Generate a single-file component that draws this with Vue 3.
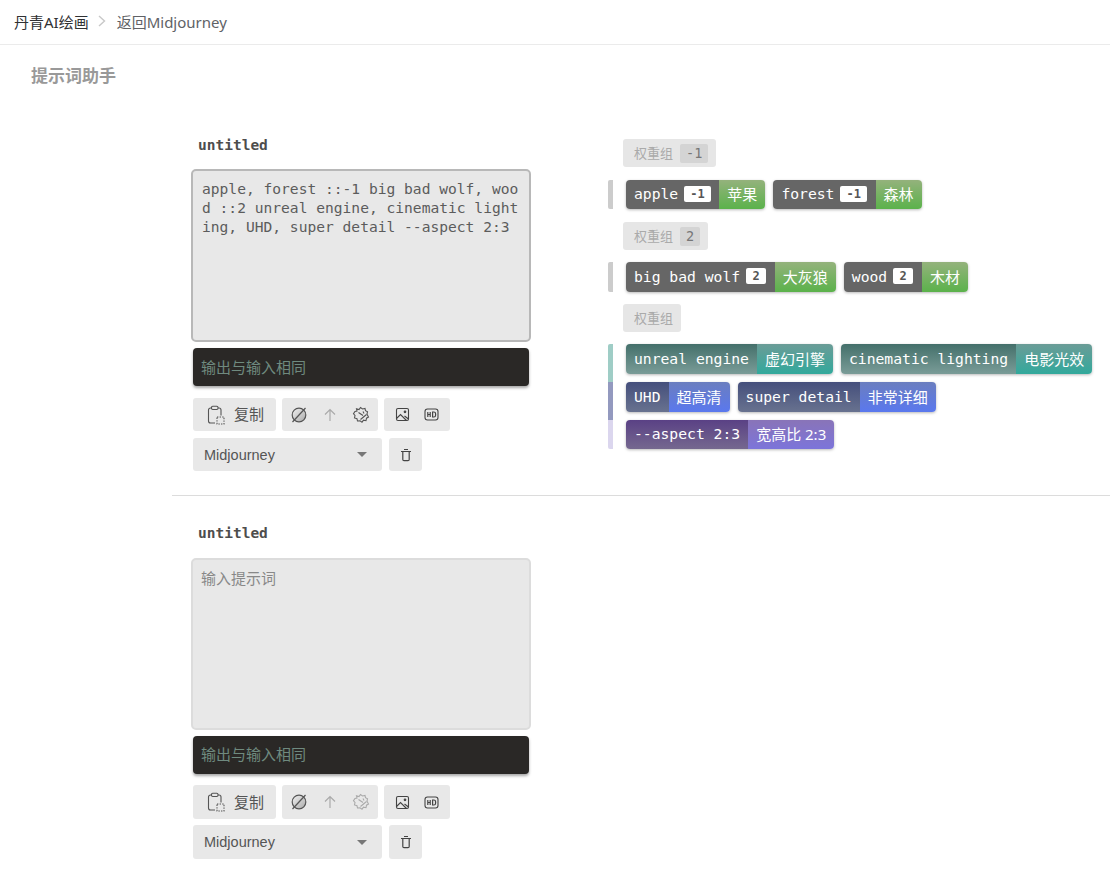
<script setup>
const groups = [
  { label: '权重组', weight: '-1', rows: [
    { bar: 'bar-gray', tags: [
      { en: 'apple', w: '-1', zh: '苹果', c: 'green' },
      { en: 'forest', w: '-1', zh: '森林', c: 'green' } ] } ] },
  { label: '权重组', weight: '2', rows: [
    { bar: 'bar-gray', tall: true, tags: [
      { en: 'big bad wolf', w: '2', zh: '大灰狼', c: 'green' },
      { en: 'wood', w: '2', zh: '木材', c: 'green' } ] } ] },
  { label: '权重组', weight: '', rows: [
    { bar: 'bar-teal', tags: [
      { en: 'unreal engine', zh: '虚幻引擎', c: 'teal' },
      { en: 'cinematic lighting', zh: '电影光效', c: 'teal' } ] },
    { bar: 'bar-blue', tags: [
      { en: 'UHD', zh: '超高清', c: 'blue' },
      { en: 'super detail', zh: '非常详细', c: 'blue' } ] },
    { bar: 'bar-purple', last: true, tags: [
      { en: '--aspect 2:3', zh: '宽高比 2:3', c: 'purple' } ] } ] },
]
const sections = [
  { text: 'apple, forest ::-1 big bad wolf, wood ::2 unreal engine, cinematic lighting, UHD, super detail --aspect 2:3', active: true },
  { text: '', active: false },
]
</script>

<template>
  <div class="page">
    <header class="topbar">
      <span class="crumb-home">丹青AI绘画</span>
      <svg class="crumb-sep" width="10" height="12" viewBox="0 0 10 12"><path d="M2 1l5.500 5L2 11" fill="none" stroke="#c8c8c8" stroke-width="1.400"/></svg>
      <span class="crumb-back">返回Midjourney</span>
    </header>
    <h1 class="title">提示词助手</h1>

    <main class="sections">
      <section v-for="(s, i) in sections" :key="i" class="section" :class="{ first: i === 0 }">
        <div class="editor">
          <div class="name">untitled</div>
          <div class="input" :class="{ active: s.active }">
            <span v-if="s.text" class="input-text">{{ s.text }}</span>
            <span v-else class="placeholder">输入提示词</span>
          </div>
          <div class="output">输出与输入相同</div>
          <div class="toolbar">
            <div class="btn-group copy">
              <svg width="18" height="20" viewBox="0 0 18 20" fill="none" stroke="#555" stroke-width="1.100">
                <path d="M8 18H3.500a2 2 0 0 1-2-2V5a2 2 0 0 1 2-2h8.500a2 2 0 0 1 2 2v5.500"/>
                <rect x="4.500" y="1.200" width="6.500" height="3.300" rx="1.200" fill="#e8e8e8"/>
                <rect x="10" y="12" width="7" height="7" stroke-dasharray="1.400 1.200"/>
              </svg>
              <span class="copy-label">复制</span>
            </div>
            <div class="btn-group tools">
              <svg width="18" height="18" viewBox="0 0 18 18" fill="none">
                <defs><linearGradient :id="'g' + i" x1="0" y1="0" x2="1" y2="1"><stop offset="0" stop-color="#f2f2f2"/><stop offset="1" stop-color="#aaa"/></linearGradient></defs>
                <circle cx="9" cy="9" r="6.800" :fill="'url(#g' + i + ')'" stroke="#555" stroke-width="1.200"/>
                <path d="M2.500 16L15.500 2" stroke="#555" stroke-width="1.200"/>
              </svg>
              <svg width="14" height="14" viewBox="0 0 14 14" fill="none" stroke="#aaa" stroke-width="1.200"><path d="M7 13V1.500M2 6.500l5-5 5 5"/></svg>
              <svg width="18" height="18" viewBox="0 0 18 18" fill="none" :stroke="s.active ? '#555' : '#aaa'" stroke-width="1.100">
                <path d="M3 5.500L5 5 4.500 2.800 7 3.500 8.500 1.500l2 1.500 2.500-.5.500 2.200 2 1-.500 2.500L16.500 11l-2 1.200-.5 2.500-2.500-.5-1.500 2-2-1.500-2.500.3-.5-2.200L2.500 12 3 9.500 1.500 7.800z"/>
                <path d="M8.500 13.500l6-5M6.500 6.500l4.500 3M11 5.500l1 2"/>
              </svg>
            </div>
            <div class="btn-group media">
              <svg width="15" height="15" viewBox="0 0 15 15" fill="none" stroke="#444" stroke-width="1.100">
                <rect x="1.500" y="1.500" width="12" height="12" rx="1.500"/>
                <path d="M1.500 11.500L5.500 7.500l6 6M9.500 9l4 3"/>
                <circle cx="10" cy="4.800" r=".8" fill="#444"/>
              </svg>
              <svg width="15" height="15" viewBox="0 0 15 15" fill="none" stroke="#444" stroke-width="1.100">
                <rect x="1" y="2" width="13" height="11" rx="2.500"/>
                <path d="M3.800 5v5M3.800 7.500h2.400M6.200 5v5M8.600 5v5h1.200a1.800 1.800 0 0 0 1.800-1.800V6.800A1.800 1.800 0 0 0 9.800 5z" stroke-width="1.200"/>
              </svg>
            </div>
          </div>
          <div class="selectrow">
            <div class="select">
              <span>Midjourney</span>
              <svg width="10" height="5" viewBox="0 0 10 5"><path d="M0 0h10L5 5z" fill="#777"/></svg>
            </div>
            <div class="trash">
              <svg width="12" height="14" viewBox="0 0 12 14" fill="none" stroke="#444" stroke-width="1.200">
                <path d="M1 3.500h10M4 1.500h4M2.800 3.500v8a1.200 1.200 0 0 0 1.200 1.200h4a1.200 1.200 0 0 0 1.200-1.200v-8"/>
              </svg>
            </div>
          </div>
        </div>

        <div v-if="s.active" class="result">
          <template v-for="(g, gi) in groups" :key="gi">
            <div class="glabel">
              <span class="glabel-text">{{ g.label }}</span>
              <span v-if="g.weight" class="gweight">{{ g.weight }}</span>
            </div>
            <div class="grows" :class="'g' + gi">
              <div v-for="(r, ri) in g.rows" :key="ri" class="row" :class="[r.bar, { tall: r.tall, last: r.last }]">
                <div v-for="t in r.tags" :key="t.en" class="tag" :class="t.c">
                  <span class="tag-en">{{ t.en }}<b v-if="t.w" class="tag-w">{{ t.w }}</b></span>
                  <span class="tag-zh">{{ t.zh }}</span>
                </div>
              </div>
            </div>
          </template>
        </div>
      </section>
    </main>
  </div>
</template>

<style>
body { background: #fff; }
</style>

<style scoped>
.page {
  width: 1110px;
  height: 874px;
  overflow: hidden;
  background: #fff;
  font-family: "Noto Sans", "Noto Sans CJK SC", sans-serif;
  color: #333;
}
.topbar {
  height: 44px;
  border-bottom: 1px solid #ebebeb;
  display: flex;
  align-items: center;
  padding-left: 14px;
  font-size: 15px;
  line-height: 20px;
}
.crumb-home { color: #303133; }
.crumb-sep { margin: -2px 10px 0 8px; }
.crumb-back { color: #606266; }
.title {
  margin: 0;
  padding: 20px 0 0 31px;
  height: 72px;
  box-sizing: border-box;
  font-size: 17px;
  line-height: 22px;
  font-weight: 700;
  color: #999;
}
.sections { margin-left: 172px; padding-top: 10px; }
.section { display: flex; padding: 0 0 12px 20px; }
.section.first { border-bottom: 1px solid #dcdcdc; height: 369px; box-sizing: border-box; padding-bottom: 0; margin-bottom: 20px; }
.editor { width: 416px; flex: none; }
.name {
  font-family: "DejaVu Sans Mono", monospace;
  font-size: 14.500px;
  font-weight: 700;
  line-height: 18px;
  color: #4d4d4d;
  padding: 9px 0 0 6px;
  height: 42px;
  box-sizing: border-box;
}
.section:not(.first) .name { padding-top: 8px; }
.input {
  width: 340px;
  height: 173px;
  box-sizing: border-box;
  border: 2px solid #dcdcdc;
  border-radius: 5px;
  background: #e8e8e8;
  padding: 8px 9px 0;
  margin-left: -1px;
  font-family: "DejaVu Sans Mono", monospace;
  font-size: 14.600px;
  line-height: 19px;
  color: #5c5c5c;
  word-break: break-all;
}
.input.active { border-color: #b8b8b8; }
.input:not(.active) { height: 172px; }
.placeholder { display: block; font-family: "Noto Sans CJK SC", sans-serif; font-size: 15px; color: #888; line-height: 20px; margin-left: -1px; }
.output {
  width: 336px;
  height: 38px;
  margin: 6px 0 0 1px;
  padding-left: 8px;
  box-sizing: border-box;
  border-radius: 4px;
  background: #2a2826;
  box-shadow: 0 2px 3px rgba(0,0,0,.35);
  color: #6f8a7f;
  font-size: 15px;
  line-height: 38px;
}
.toolbar { display: flex; gap: 6px; margin: 12px 0 0 1px; }
.section:not(.first) .toolbar { margin-top: 11px; }
.section:not(.first) .output { line-height: 36px; }
.btn-group {
  height: 33px;
  background: #e8e8e8;
  border-radius: 3px;
  display: flex;
  align-items: center;
  box-sizing: border-box;
}
.section:not(.first) .btn-group { height: 34px; }
.section:not(.first) .selectrow { margin-top: 6px; }
.section:not(.first) .select, .section:not(.first) .trash { height: 34px; }
.copy { width: 83px; padding-left: 14px; gap: 9px; font-size: 15px; color: #555; }
.copy-label { padding-bottom: 2px; }
.tools { width: 96px; padding: 0 8px; justify-content: space-between; }
.media { width: 66px; padding: 0 11px; justify-content: space-between; }
.selectrow { display: flex; gap: 7px; margin: 7px 0 0 1px; }
.select {
  width: 189px;
  height: 33px;
  box-sizing: border-box;
  padding: 0 15px 0 11px;
  display: flex;
  align-items: center;
  justify-content: space-between;
  background: #e8e8e8;
  border-radius: 3px;
  font-family: "Liberation Sans", sans-serif;
  font-size: 14.500px;
  color: #555;
}
.trash {
  width: 33px;
  height: 33px;
  display: flex;
  align-items: center;
  justify-content: center;
  background: #e8e8e8;
  border-radius: 3px;
}
.result { width: 502px; flex: none; margin-top: 12px; }
.glabel {
  display: inline-flex;
  align-items: center;
  gap: 7px;
  height: 28px;
  margin-left: 15px;
  padding: 0 8px 0 11px;
  box-sizing: border-box;
  background: #e6e6e6;
  border-radius: 3px;
  color: #aaa;
  font-family: "Noto Sans CJK SC", sans-serif;
  font-size: 13px;
  vertical-align: top;
}
.glabel-text { padding-bottom: 2px; }
.gweight {
  font-family: "DejaVu Sans Mono", monospace;
  background: #d4d4d4;
  border-radius: 2px;
  color: #777;
  font-size: 13.500px;
  line-height: 19px;
  padding: 0 6px;
}
.grows { padding: 12px 0; }
.grows.g0 { padding: 13px 0; }
.row {
  display: flex;
  gap: 8px;
  padding: 0 0 8px 13px;
  border-left: 5px solid #ccc;
}
.row.bar-gray { padding-bottom: 0; height: 29px; border-radius: 2px; }
.row.tall { height: 30px; }
.row.last { padding-bottom: 0; }
.bar-teal { border-left-color: #9fcdc6; border-top-left-radius: 2px; }
.bar-blue { border-left-color: #9399bf; }
.bar-purple { border-left-color: #dbd6ee; border-bottom-left-radius: 2px; }
.tag {
  display: flex;
  height: 30px;
  border-radius: 4px;
  overflow: hidden;
  box-shadow: 0 1px 3px rgba(0,0,0,.28);
  color: #fff;
}
.bar-gray .tag { height: 29px; }
.tall .tag { height: 30px; }
.last .tag { height: 29px; }
.tag-en {
  display: flex;
  align-items: center;
  padding: 0 8px 2px;
  font-family: "DejaVu Sans Mono", monospace;
  font-size: 14.700px;
  white-space: pre;
}
.tag-w {
  font-size: 12px;
  font-weight: 700;
  line-height: 16px;
  min-width: 20px;
  box-sizing: border-box;
  text-align: center;
  padding: 0 6px;
  margin: 0 .7px 0 6px;
  background: #fff;
  color: #555;
  border-radius: 2px;
}
.tag-zh {
  display: flex;
  align-items: center;
  padding: 0 8px 2px;
  font-family: "Noto Sans", "Noto Sans CJK SC", sans-serif;
  font-size: 15px;
  white-space: pre;
}
.green .tag-en { background: #666; }
.green .tag-zh { background: linear-gradient(#94b27c, #5bb24b); }
.teal .tag-en { background: linear-gradient(#44706b, #7a9c98); }
.teal .tag-zh { background: linear-gradient(#6b9c97, #32a99c); }
.blue .tag-en { background: linear-gradient(#454f7c, #68728f); }
.blue .tag-zh { background: linear-gradient(#6b7ebf, #5a78ee); }
.purple .tag-en { background: linear-gradient(#5a4185, #75688f); }
.purple .tag-zh { background: linear-gradient(#8974b8, #7c74da); }
</style>
